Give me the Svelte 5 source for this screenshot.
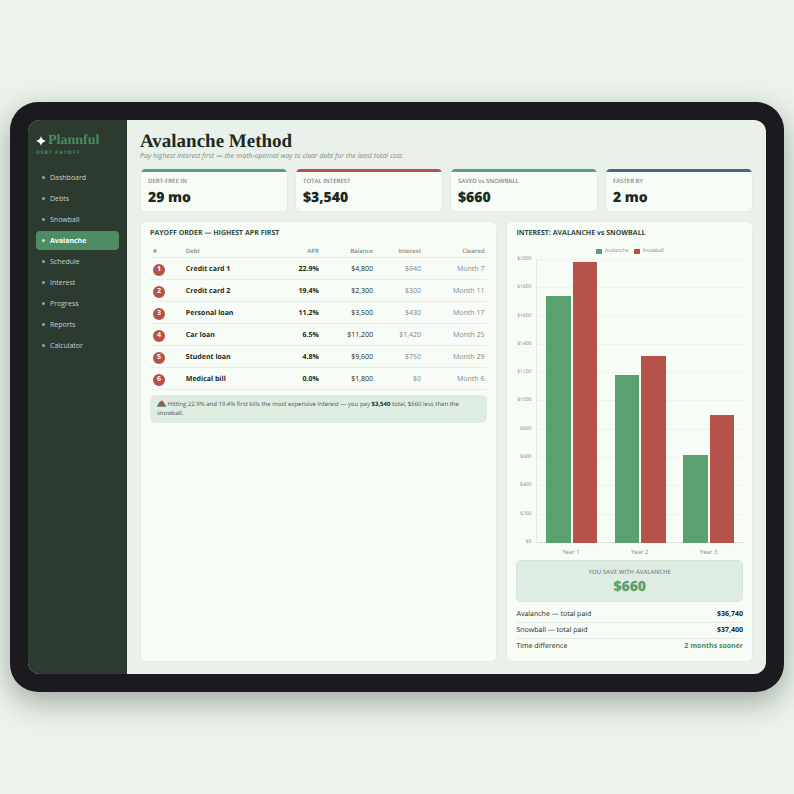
<script>
  const pages = [
    'Dashboard', 'Debts', 'Snowball', 'Avalanche', 'Schedule',
    'Interest', 'Progress', 'Reports', 'Calculator'
  ];
  let active = $state('Avalanche');

  const stats = [
    { label: 'DEBT-FREE IN', value: '29 mo', tone: 'green' },
    { label: 'TOTAL INTEREST', value: '$3,540', tone: 'red' },
    { label: 'SAVED vs SNOWBALL', value: '$660', tone: 'green' },
    { label: 'FASTER BY', value: '2 mo', tone: 'blue' }
  ];

  const debts = [
    { name: 'Credit card 1', apr: '22.9%', balance: '$4,800', interest: '$640', cleared: 'Month 7' },
    { name: 'Credit card 2', apr: '19.4%', balance: '$2,300', interest: '$300', cleared: 'Month 11' },
    { name: 'Personal loan', apr: '11.2%', balance: '$3,500', interest: '$430', cleared: 'Month 17' },
    { name: 'Car loan', apr: '6.5%', balance: '$11,200', interest: '$1,420', cleared: 'Month 25' },
    { name: 'Student loan', apr: '4.8%', balance: '$9,600', interest: '$750', cleared: 'Month 29' },
    { name: 'Medical bill', apr: '0.0%', balance: '$1,800', interest: '$0', cleared: 'Month 6' }
  ];

  const max = 2000;
  const ticks = [2000, 1800, 1600, 1400, 1200, 1000, 800, 600, 400, 200, 0];
  const years = [
    { label: 'Year 1', avalanche: 1740, snowball: 1980 },
    { label: 'Year 2', avalanche: 1180, snowball: 1320 },
    { label: 'Year 3', avalanche: 620, snowball: 900 }
  ];

  const pct = (v) => `${(v / max) * 100}%`;
</script>

<div class="page">
  <div class="device">
    <div class="screen">
      <aside class="sidebar">
        <div class="brand">
          <svg class="star" viewBox="0 0 10 10" aria-hidden="true">
            <path d="M5 0 C5.6 2.8 7.2 4.4 10 5 C7.2 5.6 5.6 7.2 5 10 C4.4 7.2 2.8 5.6 0 5 C2.8 4.4 4.4 2.8 5 0Z" />
          </svg>
          <span>Plannful</span>
        </div>
        <div class="tagline">DEBT PAYOFF</div>
        <nav>
          {#each pages as page}
            <button class="nav-item" class:active={page === active} onclick={() => (active = page)}>
              <span class="dot"></span>{page}
            </button>
          {/each}
        </nav>
      </aside>

      <main>
        <h1>Avalanche Method</h1>
        <p class="lead">Pay highest interest first — the math-optimal way to clear debt for the least total cost</p>

        <div class="stats">
          {#each stats as s}
            <section class="stat {s.tone}">
              <div class="stat-label">{s.label}</div>
              <div class="stat-value">{s.value}</div>
            </section>
          {/each}
        </div>

        <div class="panels">
          <section class="panel">
            <h2>PAYOFF ORDER — HIGHEST APR FIRST</h2>
            <table>
              <thead>
                <tr>
                  <th class="c-rank">#</th>
                  <th class="c-name">Debt</th>
                  <th class="c-apr num">APR</th>
                  <th class="c-balance num">Balance</th>
                  <th class="c-interest num">Interest</th>
                  <th class="c-cleared num">Cleared</th>
                </tr>
              </thead>
              <tbody>
                {#each debts as d, i}
                  <tr>
                    <td><span class="rank">{i + 1}</span></td>
                    <td class="strong">{d.name}</td>
                    <td class="num strong">{d.apr}</td>
                    <td class="num">{d.balance}</td>
                    <td class="num muted">{d.interest}</td>
                    <td class="num muted">{d.cleared}</td>
                  </tr>
                {/each}
              </tbody>
            </table>
            <p class="note">
              <svg class="mountain" viewBox="0 0 9 7" aria-hidden="true">
                <path fill="#6b7570" d="M0 6.5 L2 2.6 L3.2 1.4 L4.8 .4 L6.4 1.6 L9 6.5Z" />
                <path fill="#b7524a" d="M2.2 3.8 L4.6 1 L7 3.8 L6 5.4 L3.4 5.2Z" />
                <path fill="#3f8a5a" d="M0 6.5 L1.4 4.4 L3 5.4 L6 5.4 L7.8 4.2 L9 6.5Z" />
              </svg>
              Hitting 22.9% and 19.4% first kills the most expensive interest — you pay <strong>$3,540</strong> total, $660 less than the snowball.
            </p>
          </section>

          <section class="panel">
            <h2>INTEREST: AVALANCHE vs SNOWBALL</h2>
            <div class="legend">
              <span><i class="swatch avalanche"></i>Avalanche</span>
              <span><i class="swatch snowball"></i>Snowball</span>
            </div>
            <div class="chart">
              <div class="y-axis">
                {#each ticks as t}
                  <span>${t}</span>
                {/each}
              </div>
              <div class="plot">
                <div class="gridlines">
                  {#each ticks as t}
                    <i></i>
                  {/each}
                </div>
                {#each years as y}
                  <div class="group">
                    <div class="bar avalanche" style="height: {pct(y.avalanche)}"></div>
                    <div class="bar snowball" style="height: {pct(y.snowball)}"></div>
                  </div>
                {/each}
              </div>
              <div class="x-axis">
                {#each years as y}
                  <span>{y.label}</span>
                {/each}
              </div>
            </div>

            <div class="saving">
              <div class="saving-label">YOU SAVE WITH AVALANCHE</div>
              <div class="saving-value">$660</div>
            </div>

            <dl>
              <div><dt>Avalanche — total paid</dt><dd>$36,740</dd></div>
              <div><dt>Snowball — total paid</dt><dd>$37,400</dd></div>
              <div><dt>Time difference</dt><dd class="good">2 months sooner</dd></div>
            </dl>
          </section>
        </div>
      </main>
    </div>
  </div>
</div>

<style>
  :global(body) {
    margin: 0;
    background: #ebf3eb;
  }

  .page {
    --green: #5ba06f;
    --red: #b5524a;
    --ink: #1b2a22;
    --muted: #7d8a82;
    --line: #e4ece5;
    min-height: 100vh;
    box-sizing: border-box;
    padding: 20px 10px;
    display: flex;
    flex-direction: column;
    justify-content: center;
    overflow: hidden;
    font-family: 'Open Sans', 'Noto Sans', sans-serif;
    font-size: 7px;
    line-height: 10px;
    color: var(--ink);
    text-rendering: geometricPrecision;
  }

  .device {
    padding: 18px;
    border-radius: 28px;
    background: #1b1a1e;
    box-shadow: 0 10px 30px rgba(25, 40, 30, 0.36);
  }

  .screen {
    display: flex;
    border-radius: 12px;
    overflow: hidden;
    background: #eaf1ea;
  }

  .sidebar {
    width: 99px;
    flex-shrink: 0;
    box-sizing: border-box;
    padding: 13px 8px;
    background: #2c3a30;
  }

  .brand {
    display: flex;
    align-items: center;
    gap: 2px;
    font-family: 'Liberation Serif', serif;
    font-size: 14px;
    font-weight: 700;
    line-height: 16px;
    color: #4b8a60;
  }

  .star {
    width: 10px;
    height: 10px;
    fill: #fff;
  }

  .tagline {
    font-size: 5px;
    font-weight: 700;
    line-height: 8px;
    letter-spacing: 1px;
    color: #4b8a60;
  }

  nav {
    display: flex;
    flex-direction: column;
    gap: 2px;
    margin-top: 11px;
  }

  .nav-item {
    display: flex;
    align-items: center;
    gap: 5px;
    height: 19px;
    padding: 0 6px;
    border: none;
    border-radius: 4px;
    background: transparent;
    color: #c8d2ca;
    font: inherit;
    text-align: left;
    cursor: pointer;
  }
  .nav-item.active {
    background: #4e8d63;
    color: #fff;
    font-weight: 700;
  }

  .dot {
    width: 3px;
    height: 3px;
    border-radius: 50%;
    background: currentColor;
    opacity: 0.7;
  }

  main {
    flex: 1;
    min-width: 0;
    display: flex;
    flex-direction: column;
    padding: 11px 13px 12px;
  }

  h1 {
    margin: 0;
    font-family: 'Liberation Serif', serif;
    font-size: 19px;
    line-height: 22px;
    font-weight: 700;
  }

  .lead {
    margin: 0;
    font-style: italic;
    line-height: 8px;
    color: var(--muted);
  }

  .stats {
    display: grid;
    grid-template-columns: repeat(4, 1fr);
    gap: 7px;
    margin-top: 8px;
  }

  .stat {
    --tone: var(--green);
    padding: 8px 7px 4px;
    border: 1px solid var(--line);
    border-top: none;
    border-radius: 5px;
    background: linear-gradient(var(--tone) 3px, #f7fcf7 3px) border-box;
  }
  .stat.red { --tone: var(--red); }
  .stat.blue { --tone: #466888; }

  .stat-label {
    font-size: 6px;
    line-height: 8px;
    font-weight: 600;
    color: var(--muted);
  }

  .stat-value {
    margin-top: 4px;
    font-size: 14px;
    line-height: 18px;
    font-weight: 800;
  }

  .panels {
    flex: 1;
    display: grid;
    grid-template-columns: 29fr 20fr;
    gap: 9px;
    margin-top: 9px;
  }

  .panel {
    min-width: 0;
    padding: 7px 9px;
    border: 1px solid var(--line);
    border-radius: 6px;
    background: #f7fcf7;
  }

  h2 {
    margin: 0;
    font-size: 7px;
    line-height: 10px;
    font-weight: 700;
    color: #34493d;
  }

  table {
    width: 100%;
    margin-top: 5px;
    table-layout: fixed;
    border-collapse: collapse;
  }

  th, td {
    padding: 0 3px;
    border-bottom: 1px solid var(--line);
    text-align: left;
  }
  th {
    height: 13px;
    font-size: 6px;
    font-weight: 600;
    color: var(--muted);
  }
  td {
    height: 19px;
    padding-top: 2px;
  }

  .num { text-align: right; }
  .strong { font-weight: 700; }
  .muted { color: var(--muted); }

  .c-rank { width: 9%; }
  .c-name { width: 29%; }
  .c-apr { width: 13%; }
  .c-balance { width: 16%; }
  .c-interest { width: 14%; }
  .c-cleared { width: 19%; }

  .rank {
    display: block;
    width: 12px;
    border-radius: 50%;
    background: var(--red);
    color: #fff;
    font-weight: 700;
    line-height: 12px;
    text-align: center;
  }

  .note {
    margin: 5px 0 0;
    padding: 5px 7px;
    border-radius: 5px;
    background: #dfece2;
    font-size: 6px;
    line-height: 9px;
    color: #46574d;
  }
  .note strong { color: var(--ink); }

  .mountain {
    width: 9px;
    height: 7px;
    vertical-align: -1px;
  }

  .legend {
    display: flex;
    justify-content: center;
    gap: 5px;
    margin-top: 8px;
    font-size: 5px;
    line-height: 8px;
    color: var(--muted);
  }
  .legend span {
    display: flex;
    align-items: center;
    gap: 3px;
  }

  .swatch {
    width: 6px;
    height: 5px;
  }

  .avalanche { background: #5ba06f; }
  .snowball { background: #b5524a; }

  .chart {
    display: grid;
    grid-template-columns: 15px 1fr;
    grid-template-rows: 284px 17px;
    column-gap: 5px;
    margin-top: 4px;
  }

  .y-axis {
    display: flex;
    flex-direction: column;
    justify-content: space-between;
    font-size: 5px;
    text-align: right;
    color: var(--muted);
  }
  .y-axis span {
    height: 1px;
    line-height: 1px;
  }

  .plot {
    position: relative;
    display: grid;
    grid-template-columns: repeat(3, 1fr);
    border-left: 1px solid var(--line);
  }

  .gridlines {
    position: absolute;
    inset: 0;
    display: flex;
    flex-direction: column;
    justify-content: space-between;
  }
  .gridlines i {
    height: 1px;
    background: #edf3ed;
  }
  .gridlines i:last-child { background: #d9e2da; }

  .group {
    position: relative;
    display: flex;
    align-items: flex-end;
    justify-content: center;
    gap: 2px;
  }

  .bar { width: 36%; }

  .x-axis {
    grid-column: 2;
    display: grid;
    grid-template-columns: repeat(3, 1fr);
    align-items: center;
    font-size: 6px;
    text-align: center;
    color: var(--muted);
  }

  .saving {
    padding: 7px 7px 5px;
    border: 1px solid #d5e5d9;
    border-radius: 5px;
    background: #dfece2;
    text-align: center;
  }

  .saving-label {
    font-size: 6px;
    line-height: 8px;
    font-weight: 600;
    color: var(--muted);
  }

  .saving-value {
    margin-top: 2px;
    font-size: 14px;
    line-height: 18px;
    font-weight: 800;
    color: var(--green);
  }

  dl { margin: 5px 0 0; }
  dl div {
    display: flex;
    justify-content: space-between;
    padding: 3px 0 2px;
    border-bottom: 1px solid var(--line);
  }
  dl div:last-child { border-bottom: none; }
  dd {
    margin: 0;
    font-weight: 700;
  }
  .good { color: #4b8a60; }
</style>
